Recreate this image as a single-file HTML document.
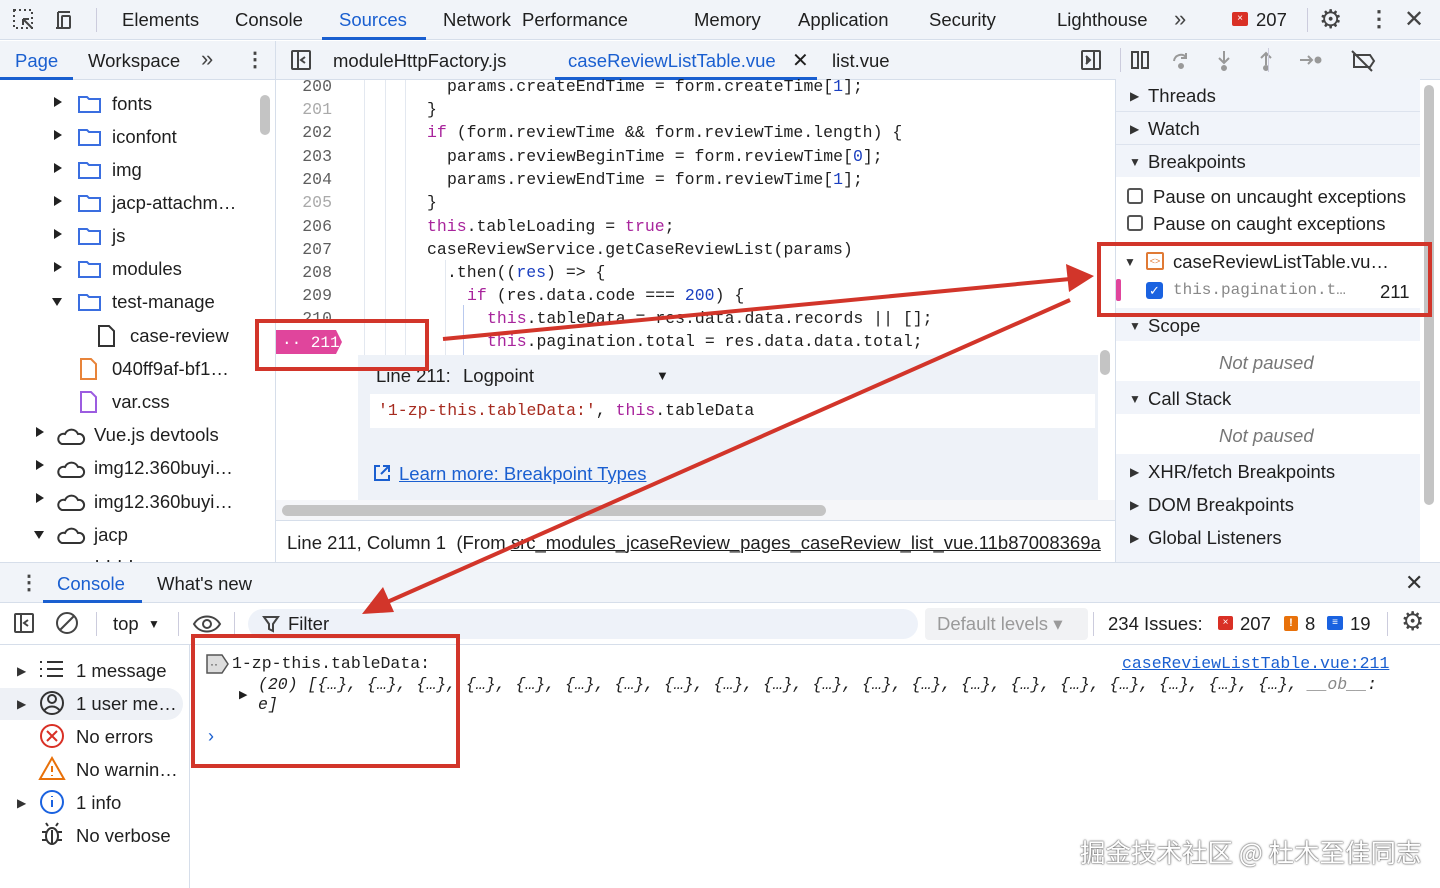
<!DOCTYPE html>
<html><head><meta charset="utf-8"><style>
*{box-sizing:border-box;margin:0;padding:0}
body{width:1440px;height:888px;overflow:hidden;background:#fff;font-family:"Liberation Sans",Arial,sans-serif;color:#1f1f1f;position:relative;font-size:18.5px}
.a{position:absolute;white-space:nowrap}
.mono{font-family:"Liberation Mono",monospace;font-size:16.5px}
.bar{background:#f1f4f9}
.blue{color:#1a5fd0}
.kw{color:#a8249c}.num{color:#1a3fc0}.str{color:#a62b1f}
.ln{color:#5e5e5e;width:56px;text-align:right;left:276px}
.hd{background:#f1f4fa;left:1116px;width:304px;height:33px}
.tri{font-size:12px;color:#333}
.rb{position:absolute;border:4px solid #d2352a}
</style></head><body>
<!-- top bar -->
<div class="a bar" style="left:0;top:0;width:1440px;height:40px;border-bottom:1px solid #d6deea"></div>
<svg class="a" style="left:12px;top:8px" width="60" height="24" viewBox="0 0 60 24" fill="none" stroke="#444" stroke-width="2">
<rect x="2" y="2" width="18" height="18" stroke-dasharray="2 3"/><path d="M10 10l9 9M10 10v6M10 10h6" stroke="#f1f4f9" stroke-width="5"/><path d="M11 11l9 9M11 11v6M11 11h6"/>
<path d="M46 4H58M46 4v16M44 20h10"/><rect x="50" y="8" width="8" height="12" rx="1"/></svg>
<div class="a" style="left:96px;top:8px;width:1px;height:24px;background:#ccd"></div>
<div class="a" style="left:122px;top:9px">Elements</div>
<div class="a" style="left:235px;top:9px">Console</div>
<div class="a blue" style="left:339px;top:9px">Sources</div>
<div class="a" style="left:322px;top:37px;width:104px;height:3px;background:#1a5fd0"></div>
<div class="a" style="left:443px;top:9px">Network</div>
<div class="a" style="left:522px;top:9px">Performance</div>
<div class="a" style="left:694px;top:9px">Memory</div>
<div class="a" style="left:798px;top:9px">Application</div>
<div class="a" style="left:929px;top:9px">Security</div>
<div class="a" style="left:1057px;top:9px">Lighthouse</div>
<div class="a" style="left:1174px;top:6px;font-size:22px;color:#444">»</div>
<div class="a" style="left:1232px;top:12px;width:16px;height:14px;background:#d93025;border-radius:2px;color:#fff;font-size:10px;text-align:center;line-height:14px">×</div>
<div class="a" style="left:1256px;top:9px">207</div>
<div class="a" style="left:1307px;top:8px;width:1px;height:24px;background:#ccd"></div>
<div class="a" style="left:1319px;top:4px;font-size:26px;color:#444">⚙</div>
<div class="a" style="left:1368px;top:6px;font-size:22px;color:#444;font-weight:bold">⋮</div>
<div class="a" style="left:1404px;top:5px;font-size:24px;color:#444">✕</div>
<!-- second row -->
<div class="a bar" style="left:0;top:41px;width:1440px;height:39px;border-bottom:1px solid #d6deea"></div>
<div class="a blue" style="left:15px;top:50px">Page</div>
<div class="a" style="left:0;top:77px;width:73px;height:3px;background:#1a5fd0"></div>
<div class="a" style="left:88px;top:50px">Workspace</div>
<div class="a" style="left:201px;top:46px;font-size:22px;color:#444">»</div>
<div class="a" style="left:245px;top:47px;font-size:20px;color:#444;font-weight:bold">⋮</div>
<div class="a" style="left:275px;top:41px;width:1px;height:521px;background:#d6deea"></div>
<svg class="a" style="left:290px;top:49px" width="22" height="22" fill="none" stroke="#444" stroke-width="2"><rect x="2" y="2" width="18" height="18" rx="1"/><path d="M8 2v18M15 8l-4 3 4 3"/></svg>
<div class="a" style="left:333px;top:50px">moduleHttpFactory.js</div>
<div class="a blue" style="left:568px;top:50px">caseReviewListTable.vue</div>
<div class="a" style="left:555px;top:77px;width:262px;height:3px;background:#1a5fd0"></div>
<div class="a" style="left:792px;top:48px;font-size:20px">✕</div>
<div class="a" style="left:832px;top:50px">list.vue</div>
<svg class="a" style="left:1080px;top:49px" width="300" height="24" fill="none" stroke="#444" stroke-width="2">
<rect x="2" y="2" width="18" height="18" rx="1"/><path d="M14 2v18M6 7l4 4-4 4" fill="#444"/>
<rect x="52" y="3" width="6" height="16"/><rect x="62" y="3" width="6" height="16"/>
<g stroke="#999"><path d="M94 12a7 7 0 0 1 12-4M106 4v5h-5"/><circle cx="101" cy="17" r="2" fill="#999"/>
<path d="M144 2v12M139 9l5 5 5-5"/><circle cx="144" cy="19" r="2" fill="#999"/>
<path d="M186 16V4M181 9l5-5 5 5"/><circle cx="186" cy="19" r="2" fill="#999"/>
<path d="M220 11h12M228 7l4 4-4 4"/><circle cx="238" cy="11" r="2.5" fill="#999"/></g>
<path d="M274 6h16l4 6-4 6h-16zM272 2l20 20"/></svg>
<div class="a" style="left:1120px;top:48px;width:1px;height:24px;background:#ccd"></div>
<div class="a" style="left:1268px;top:48px;width:1px;height:24px;background:#ccd"></div>
<!-- left tree -->
<div class="a" style="left:260px;top:95px;width:10px;height:40px;background:#c4c4c4;border-radius:5px"></div>
<svg class="a" style="left:0;top:88px" width="250" height="474" font-family="Liberation Sans" font-size="18.5" fill="#1f1f1f">
<g fill="#222"><path d="M54 9l8 5-8 5z M54 42l8 5-8 5z M54 75l8 5-8 5z M54 108l8 5-8 5z M54 141l8 5-8 5z M54 174l8 5-8 5z M52 210l10 0-5 8z"/>
<path d="M36 339l8 5-8 5z M36 372l8 5-8 5z M36 405l8 5-8 5z M34 443l10 0-5 8z"/></g>
<g fill="none" stroke="#3a6ee0" stroke-width="2">
<path d="M79 9h8l2 2h11v13h-21z"/><path d="M79 42h8l2 2h11v13h-21z"/><path d="M79 75h8l2 2h11v13h-21z"/><path d="M79 108h8l2 2h11v13h-21z"/><path d="M79 141h8l2 2h11v13h-21z"/><path d="M79 174h8l2 2h11v13h-21z"/><path d="M79 207h8l2 2h11v13h-21z"/></g>
<path d="M99 238h10l5 5v15h-15z" fill="none" stroke="#333" stroke-width="2"/>
<path d="M81 271h10l5 5v15h-15z" fill="none" stroke="#e8843a" stroke-width="2"/>
<path d="M81 304h10l5 5v15h-15z" fill="none" stroke="#9c5ce0" stroke-width="2"/>
<g fill="none" stroke="#333" stroke-width="2"><path d="M62 356h18a5 5 0 0 0-2-10 7 7 0 0 0-13 0 5 5 0 0 0-3 10z"/><path d="M62 389h18a5 5 0 0 0-2-10 7 7 0 0 0-13 0 5 5 0 0 0-3 10z"/><path d="M62 422h18a5 5 0 0 0-2-10 7 7 0 0 0-13 0 5 5 0 0 0-3 10z"/><path d="M62 455h18a5 5 0 0 0-2-10 7 7 0 0 0-13 0 5 5 0 0 0-3 10z"/></g>
<text x="112" y="22">fonts</text><text x="112" y="55">iconfont</text><text x="112" y="88">img</text><text x="112" y="121">jacp-attachm…</text><text x="112" y="154">js</text><text x="112" y="187">modules</text><text x="112" y="220">test-manage</text><text x="130" y="254">case-review</text><text x="112" y="287">040ff9af-bf1…</text><text x="112" y="320">var.css</text><text x="94" y="353">Vue.js devtools</text><text x="94" y="386">img12.360buyi…</text><text x="94" y="420">img12.360buyi…</text><text x="94" y="453">jacp</text><text x="94" y="478">· · · ·</text>
</svg>
<!-- editor -->
<div class="a" style="left:364px;top:80px;width:1px;height:275px;background:#e3e8f0"></div>
<div class="a" style="left:385px;top:80px;width:1px;height:275px;background:#e3e8f0"></div>
<div class="a" style="left:405px;top:80px;width:1px;height:275px;background:#e3e8f0"></div>
<div class="a" style="left:445px;top:260px;width:1px;height:95px;background:#e3e8f0"></div>
<div class="a" style="left:463px;top:305px;width:1px;height:50px;background:#b9c9ee"></div>
<div class="mono">
<div class="a ln" style="top:77px">200</div><div class="a ln" style="top:100px;color:#aaa">201</div><div class="a ln" style="top:123px">202</div><div class="a ln" style="top:147px">203</div><div class="a ln" style="top:170px">204</div><div class="a ln" style="top:193px;color:#aaa">205</div><div class="a ln" style="top:217px">206</div><div class="a ln" style="top:240px">207</div><div class="a ln" style="top:263px">208</div><div class="a ln" style="top:286px">209</div><div class="a ln" style="top:309px">210</div>
<div class="a" style="left:447px;top:77px">params.createEndTime = form.createTime[<span class="num">1</span>];</div>
<div class="a" style="left:427px;top:100px">}</div>
<div class="a" style="left:427px;top:123px"><span class="kw">if</span> (form.reviewTime &amp;&amp; form.reviewTime.length) {</div>
<div class="a" style="left:447px;top:147px">params.reviewBeginTime = form.reviewTime[<span class="num">0</span>];</div>
<div class="a" style="left:447px;top:170px">params.reviewEndTime = form.reviewTime[<span class="num">1</span>];</div>
<div class="a" style="left:427px;top:193px">}</div>
<div class="a" style="left:427px;top:217px"><span class="kw">this</span>.tableLoading = <span class="kw">true</span>;</div>
<div class="a" style="left:427px;top:240px">caseReviewService.getCaseReviewList(params)</div>
<div class="a" style="left:447px;top:263px">.then((<span class="num">res</span>) =&gt; {</div>
<div class="a" style="left:467px;top:286px"><span class="kw">if</span> (res.data.code === <span class="num">200</span>) {</div>
<div class="a" style="left:487px;top:309px"><span class="kw">this</span>.tableData = res.data.data.records || [];</div>
<div class="a" style="left:487px;top:332px"><span class="kw">this</span>.pagination.total = res.data.data.total;</div>
</div>
<svg class="a" style="left:276px;top:330px" width="70" height="24"><path d="M0 0h60l6 12-6 12H0z" fill="#e0459c"/><text x="6" y="17" font-family="Liberation Mono" font-size="16" fill="#fff">·· 211</text></svg>
<!-- logpoint popup -->
<div class="a" style="left:358px;top:355px;width:740px;height:145px;background:#eef2f8"></div>
<div class="a" style="left:376px;top:365px">Line 211:</div>
<div class="a" style="left:463px;top:365px">Logpoint</div>
<div class="a" style="left:656px;top:368px;font-size:13px">▼</div>
<div class="a" style="left:370px;top:394px;width:725px;height:34px;background:#fff"></div>
<div class="a mono" style="left:378px;top:401px"><span class="str">'1-zp-this.tableData:'</span>, <span class="kw">this</span>.tableData</div>
<svg class="a" style="left:372px;top:463px" width="20" height="20" fill="none" stroke="#1a5fd0" stroke-width="2"><path d="M8 3H3v14h14v-5M11 3h6v6M17 3l-8 8"/></svg>
<div class="a blue" style="left:399px;top:463px;text-decoration:underline">Learn more: Breakpoint Types</div>
<div class="a" style="left:1100px;top:350px;width:10px;height:25px;background:#c4c4c4;border-radius:5px"></div>
<div class="a" style="left:276px;top:500px;width:840px;height:20px;background:#f5f6f9"></div>
<div class="a" style="left:282px;top:505px;width:544px;height:11px;background:#c4c4c4;border-radius:6px"></div>
<div class="a" style="left:276px;top:520px;width:840px;height:1px;background:#d6deea"></div>
<div class="a" style="left:287px;top:532px;width:820px;overflow:hidden">Line 211, Column 1 &nbsp;(From <u>src_modules_jcaseReview_pages_caseReview_list_vue.11b87008369a</u></div>
<!-- right panel -->
<div class="a" style="left:1115px;top:80px;width:1px;height:483px;background:#d6deea"></div>
<div class="a" style="left:1424px;top:85px;width:10px;height:420px;background:#c4c4c4;border-radius:5px"></div>
<div class="a hd" style="top:78px"></div><div class="a hd" style="top:111px;border-top:1px solid #dde3ee"></div><div class="a hd" style="top:144px;border-top:1px solid #dde3ee"></div>
<div class="a hd" style="top:308px"></div><div class="a hd" style="top:381px"></div>
<div class="a hd" style="top:454px;height:108px"></div>
<div class="a tri" style="left:1130px;top:89px">▶</div><div class="a" style="left:1148px;top:85px">Threads</div>
<div class="a tri" style="left:1130px;top:122px">▶</div><div class="a" style="left:1148px;top:118px">Watch</div>
<div class="a tri" style="left:1129px;top:155px">▼</div><div class="a" style="left:1148px;top:151px">Breakpoints</div>
<div class="a" style="left:1127px;top:188px;width:16px;height:16px;border:2px solid #555;border-radius:3px"></div><div class="a" style="left:1153px;top:186px">Pause on uncaught exceptions</div>
<div class="a" style="left:1127px;top:215px;width:16px;height:16px;border:2px solid #555;border-radius:3px"></div><div class="a" style="left:1153px;top:213px">Pause on caught exceptions</div>
<div class="a tri" style="left:1124px;top:255px">▼</div>
<div class="a" style="left:1146px;top:252px;width:18px;height:18px;border:2px solid #e07a35;border-radius:2px;color:#e07a35;font-size:9px;text-align:center;line-height:14px">&lt;&gt;</div>
<div class="a" style="left:1173px;top:251px">caseReviewListTable.vu…</div>
<div class="a" style="left:1116px;top:279px;width:5px;height:22px;background:#e0459c;border-radius:2px"></div>
<div class="a" style="left:1146px;top:282px;width:17px;height:17px;background:#1a62e0;border-radius:3px;color:#fff;font-size:13px;text-align:center;line-height:17px">✓</div>
<div class="a mono" style="left:1173px;top:281px;color:#888;font-size:16px">this.pagination.t…</div>
<div class="a" style="left:1380px;top:281px">211</div>
<div class="a tri" style="left:1129px;top:319px">▼</div><div class="a" style="left:1148px;top:315px">Scope</div>
<div class="a" style="left:1219px;top:352px;font-style:italic;color:#777">Not paused</div>
<div class="a tri" style="left:1129px;top:392px">▼</div><div class="a" style="left:1148px;top:388px">Call Stack</div>
<div class="a" style="left:1219px;top:425px;font-style:italic;color:#777">Not paused</div>
<div class="a tri" style="left:1130px;top:465px">▶</div><div class="a" style="left:1148px;top:461px">XHR/fetch Breakpoints</div>
<div class="a tri" style="left:1130px;top:498px">▶</div><div class="a" style="left:1148px;top:494px">DOM Breakpoints</div>
<div class="a tri" style="left:1130px;top:531px">▶</div><div class="a" style="left:1148px;top:527px">Global Listeners</div>
<!-- drawer -->
<div class="a bar" style="left:0;top:562px;width:1440px;height:41px;border-top:1px solid #d6deea;border-bottom:1px solid #d6deea"></div>
<div class="a" style="left:19px;top:570px;font-size:20px;font-weight:bold;color:#444">⋮</div>
<div class="a blue" style="left:57px;top:573px">Console</div>
<div class="a" style="left:43px;top:600px;width:99px;height:3px;background:#1a5fd0"></div>
<div class="a" style="left:157px;top:573px">What's new</div>
<div class="a" style="left:1405px;top:570px;font-size:22px;color:#333">✕</div>
<div class="a" style="left:0;top:644px;width:1440px;height:1px;background:#d6deea"></div>
<svg class="a" style="left:13px;top:612px" width="70" height="24" fill="none" stroke="#444" stroke-width="2"><rect x="2" y="2" width="18" height="18" rx="1"/><path d="M8 2v18M15 8l-4 3 4 3"/><circle cx="54" cy="11" r="10"/><path d="M47 18l14-14"/></svg>
<div class="a" style="left:96px;top:612px;width:1px;height:24px;background:#ccd"></div>
<div class="a" style="left:113px;top:613px">top</div><div class="a" style="left:148px;top:617px;font-size:12px">▼</div>
<div class="a" style="left:178px;top:612px;width:1px;height:24px;background:#ccd"></div>
<svg class="a" style="left:192px;top:614px" width="30" height="20" fill="none" stroke="#444" stroke-width="2"><path d="M2 10c6-10 20-10 26 0-6 10-20 10-26 0z"/><circle cx="15" cy="10" r="4"/></svg>
<div class="a" style="left:234px;top:612px;width:1px;height:24px;background:#ccd"></div>
<div class="a" style="left:248px;top:609px;width:670px;height:30px;background:#eef2f9;border-radius:15px"></div>
<svg class="a" style="left:262px;top:615px" width="18" height="18" fill="none" stroke="#444" stroke-width="2"><path d="M2 2h14l-5 7v7l-4-2V9z"/></svg>
<div class="a" style="left:288px;top:613px">Filter</div>
<div class="a" style="left:925px;top:608px;width:163px;height:32px;background:#f1f2f4;border-radius:4px"></div>
<div class="a" style="left:937px;top:613px;color:#9a9a9a">Default levels ▾</div>
<div class="a" style="left:1093px;top:612px;width:1px;height:24px;background:#ccd"></div>
<div class="a" style="left:1108px;top:613px">234 Issues:</div>
<div class="a" style="left:1218px;top:616px;width:15px;height:14px;background:#d93025;border-radius:2px;color:#fff;font-size:10px;text-align:center;line-height:14px">×</div>
<div class="a" style="left:1240px;top:613px">207</div>
<div class="a" style="left:1284px;top:616px;width:14px;height:15px;background:#e8710a;border-radius:2px;color:#fff;font-size:11px;text-align:center;line-height:15px;font-weight:bold">!</div>
<div class="a" style="left:1305px;top:613px">8</div>
<div class="a" style="left:1327px;top:616px;width:16px;height:14px;background:#1a62e0;border-radius:2px;color:#fff;font-size:10px;text-align:center;line-height:13px">≡</div>
<div class="a" style="left:1350px;top:613px">19</div>
<div class="a" style="left:1387px;top:612px;width:1px;height:24px;background:#ccd"></div>
<div class="a" style="left:1401px;top:606px;font-size:26px;color:#444">⚙</div>
<!-- console sidebar -->
<div class="a" style="left:189px;top:645px;width:1px;height:243px;background:#d6deea"></div>
<div class="a" style="left:0;top:688px;width:183px;height:32px;background:#eef1f6;border-radius:0 16px 16px 0"></div>
<div class="a tri" style="left:17px;top:664px">▶</div><div class="a tri" style="left:17px;top:697px">▶</div><div class="a tri" style="left:17px;top:796px">▶</div>
<svg class="a" style="left:38px;top:656px" width="30" height="195" fill="none" stroke-width="2">
<g stroke="#333"><path d="M2 6h2M9 6h16M2 13h2M9 13h16M2 20h2M9 20h16"/><circle cx="14" cy="47" r="11"/><circle cx="14" cy="43" r="4"/><path d="M6 55c4-6 12-6 16 0"/></g>
<g stroke="#d93025"><circle cx="14" cy="80" r="11"/><path d="M9 75l10 10M19 75l-10 10"/></g>
<g stroke="#e8710a"><path d="M14 102l12 21H2z"/><path d="M14 110v6M14 119v1"/></g>
<g stroke="#1a62e0"><circle cx="14" cy="146" r="11"/><path d="M14 144v7M14 140v1"/></g>
<g stroke="#333"><ellipse cx="14" cy="180" rx="6" ry="8"/><path d="M4 176h4M20 176h4M4 184h4M20 184h4M10 170l-2-3M18 170l2-3M14 174v14"/></g></svg>
<div class="a" style="left:76px;top:660px">1 message</div>
<div class="a" style="left:76px;top:693px">1 user me…</div>
<div class="a" style="left:76px;top:726px">No errors</div>
<div class="a" style="left:76px;top:759px">No warnin…</div>
<div class="a" style="left:76px;top:792px">1 info</div>
<div class="a" style="left:76px;top:825px">No verbose</div>
<!-- console message -->
<svg class="a" style="left:206px;top:654px" width="24" height="20"><path d="M1 1h15l6 9-6 9H1z" fill="#ddd" stroke="#555" stroke-width="1.5"/><text x="4" y="14" font-size="12" fill="#333">··</text></svg>
<div class="a mono" style="left:232px;top:654px">1-zp-this.tableData:</div>
<div class="a" style="left:239px;top:688px;font-size:11px">▶</div>
<div class="a mono" style="left:258px;top:675px;font-style:italic">(20) [{…}, {…}, {…}, {…}, {…}, {…}, {…}, {…}, {…}, {…}, {…}, {…}, {…}, {…}, {…}, {…}, {…}, {…}, {…}, {…}, <span style="color:#888">__ob__</span>:</div>
<div class="a mono" style="left:258px;top:695px;font-style:italic">e]</div>
<div class="a mono blue" style="left:1122px;top:654px;text-decoration:underline">caseReviewListTable.vue:211</div>
<div class="a" style="left:208px;top:726px;color:#1a5fd0;font-size:18px">›</div>
<!-- annotations -->
<div class="rb" style="left:255px;top:319px;width:174px;height:52px"></div>
<div class="rb" style="left:1097px;top:242px;width:335px;height:75px"></div>
<div class="rb" style="left:191px;top:634px;width:269px;height:134px"></div>
<svg class="a" style="left:0;top:0" width="1440" height="888"><g stroke="#d2352a" stroke-width="4" fill="#d2352a">
<path d="M443 339L1070 279"/><path d="M1094 276l-28-12 3 28z" stroke="none"/>
<path d="M1070 300L385 603"/><path d="M362 614l32-2-11-25z" stroke="none"/></g></svg>
<div class="a" style="left:1080px;top:833px;font-size:25.5px;font-family:'Noto Sans CJK SC',sans-serif;color:#fff;text-shadow:0 0 2px #555,0 0 1px #333">掘金技术社区 @ 杜木至佳同志</div>
</body></html>
